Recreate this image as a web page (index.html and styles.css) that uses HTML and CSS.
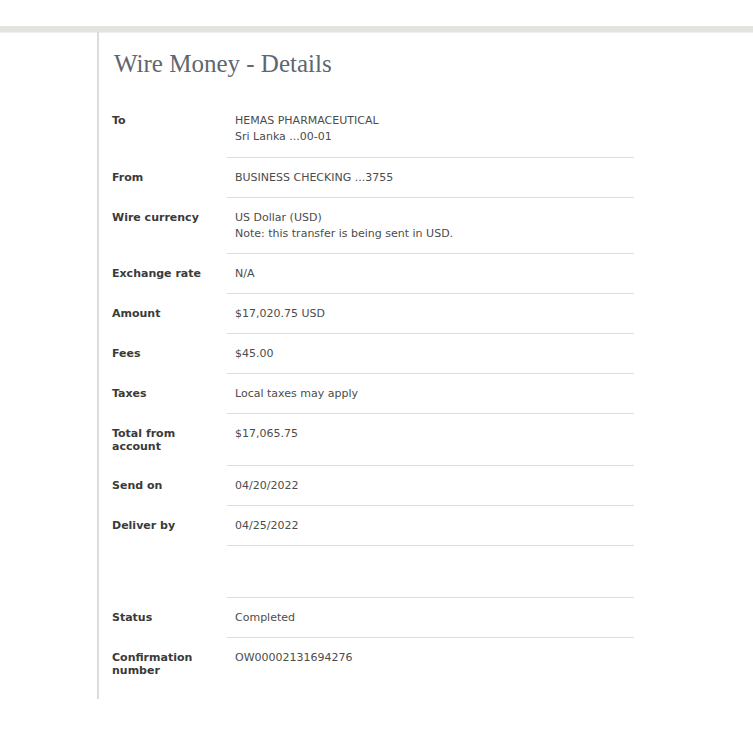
FILE: index.html
```html
<!DOCTYPE html>
<html>
<head>
<meta charset="utf-8">
<link rel="stylesheet" href="styles.css">
</head>
<body>
<div class="topbar"></div>
<div class="page">
  <h1 class="title">Wire Money - Details</h1>
  <div class="rows">
    <div class="row"><div class="label">To</div><div class="value">HEMAS PHARMACEUTICAL<br>Sri Lanka ...00-01</div></div>
    <div class="row"><div class="label">From</div><div class="value">BUSINESS CHECKING ...3755</div></div>
    <div class="row"><div class="label">Wire currency</div><div class="value">US Dollar (USD)<br>Note: this transfer is being sent in USD.</div></div>
    <div class="row"><div class="label">Exchange rate</div><div class="value">N/A</div></div>
    <div class="row"><div class="label">Amount</div><div class="value">$17,020.75 USD</div></div>
    <div class="row"><div class="label">Fees</div><div class="value">$45.00</div></div>
    <div class="row"><div class="label">Taxes</div><div class="value">Local taxes may apply</div></div>
    <div class="row"><div class="label">Total from<br>account</div><div class="value">$17,065.75</div></div>
    <div class="row"><div class="label">Send on</div><div class="value">04/20/2022</div></div>
    <div class="row"><div class="label">Deliver by</div><div class="value">04/25/2022</div></div>
    <div class="row spacer"><div class="label"></div><div class="value"></div></div>
    <div class="row"><div class="label">Status</div><div class="value">Completed</div></div>
    <div class="row last"><div class="label">Confirmation<br>number</div><div class="value">OW00002131694276</div></div>
  </div>
</div>
</body>
</html>
```
FILE: styles.css
```css
html, body {
  margin: 0;
  padding: 0;
  background: #ffffff;
}
body {
  font-family: "DejaVu Sans", Verdana, sans-serif;
  font-size: 11px;
  line-height: 16px;
  color: #4a4a4a;
}
.topbar {
  margin-top: 26px;
  height: 6px;
  background: #e3e3df;
  border-bottom: 1px solid #efeff2;
}
.page {
  margin-left: 97px;
  margin-top: -1px;
  width: 522px;
  border-left: 2px solid #dcdcdc;
  padding: 17px 0 9px 13px;
}
.title {
  margin: 0;
  font-family: "Liberation Serif", "Times New Roman", serif;
  font-weight: normal;
  font-size: 25px;
  line-height: 30px;
  color: #60666f;
  padding-left: 2px;
}
.rows {
  margin-top: 22px;
  display: flex;
  flex-direction: column;
}
.row {
  display: flex;
}
.label {
  width: 115px;
  flex: none;
  font-weight: bold;
  color: #3a3a3a;
  line-height: 13px;
  padding: 13px 0 13px 0;
}
.value {
  flex: 1;
  padding: 12px 8px 11px 8px;
  border-bottom: 1px solid #dddddd;
  color: #4c4c4c;
}
.value.two, .row:first-child .value {
  padding-bottom: 12px;
}
.spacer .label {
  padding: 0;
}
.spacer .value {
  padding: 0;
  height: 51px;
}
.last .value {
  border-bottom: none;
}
```
